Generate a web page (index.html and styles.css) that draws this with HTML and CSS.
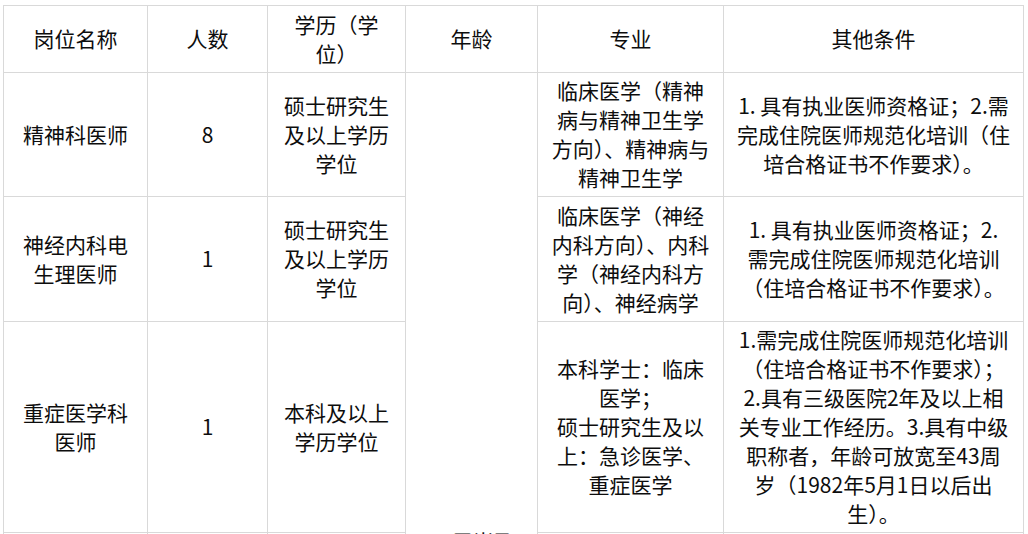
FILE: index.html
```html
<!DOCTYPE html>
<html lang="zh-CN">
<head>
<meta charset="utf-8">
<title>招聘岗位</title>
<link rel="stylesheet" href="styles.css">
</head>
<body>
<table class="jobs">
  <colgroup>
    <col class="c-name">
    <col class="c-num">
    <col class="c-edu">
    <col class="c-age">
    <col class="c-major">
    <col class="c-other">
  </colgroup>
  <thead>
    <tr>
      <th>岗位名称</th>
      <th>人数</th>
      <th>学历（学位）</th>
      <th>年龄</th>
      <th>专业</th>
      <th>其他条件</th>
    </tr>
  </thead>
  <tbody>
    <tr>
      <td>精神科医师</td>
      <td>8</td>
      <td>硕士研究生及以上学历学位</td>
      <td class="age" rowspan="4">35周岁及以下</td>
      <td>临床医学（精神病与精神卫生学方向）、精神病与精神卫生学</td>
      <td>1. 具有执业医师资格证；2.需完成住院医师规范化培训（住培合格证书不作要求）。</td>
    </tr>
    <tr>
      <td>神经内科电生理医师</td>
      <td>1</td>
      <td>硕士研究生及以上学历学位</td>
      <td>临床医学（神经内科方向）、内科学（神经内科方向）、神经病学</td>
      <td>1. 具有执业医师资格证；2. 需完成住院医师规范化培训（住培合格证书不作要求）。</td>
    </tr>
    <tr>
      <td>重症医学科医师</td>
      <td>1</td>
      <td>本科及以上学历学位</td>
      <td>本科学士：临床医学；<br>硕士研究生及以上：急诊医学、重症医学</td>
      <td>1.需完成住院医师规范化培训（住培合格证书不作要求）；2.具有三级医院2年及以上相关专业工作经历。3.具有中级职称者，年龄可放宽至43周岁（1982年5月1日以后出生）。</td>
    </tr>
    <tr class="more">
      <td></td>
      <td></td>
      <td></td>
      <td></td>
      <td></td>
    </tr>
  </tbody>
</table>
</body>
</html>
```

FILE: styles.css
```css
html, body {
  background: #ffffff;
}

body {
  margin: 5px 0 0 3px;
  font-family: "Noto Sans CJK SC", "Noto Sans", sans-serif;
  color: #0d0d0d;
}

.jobs {
  border-collapse: collapse;
  table-layout: fixed;
  width: 1021px;
  font-size: 21px;
  line-height: 29px;
}

.c-name { width: 144px; }
.c-num { width: 120px; }
.c-edu { width: 138px; }
.c-age { width: 132px; }
.c-major { width: 186px; }
.c-other { width: 300px; }

.jobs th,
.jobs td {
  border: 1px solid #d9d9d9;
  padding: 3.5px 13px 4px;
  text-align: center;
  vertical-align: middle;
  font-weight: 400;
}

.jobs td.age {
  padding-left: 14px;
  padding-right: 14px;
}

.jobs tr.more td {
  height: 500px;
}
```
